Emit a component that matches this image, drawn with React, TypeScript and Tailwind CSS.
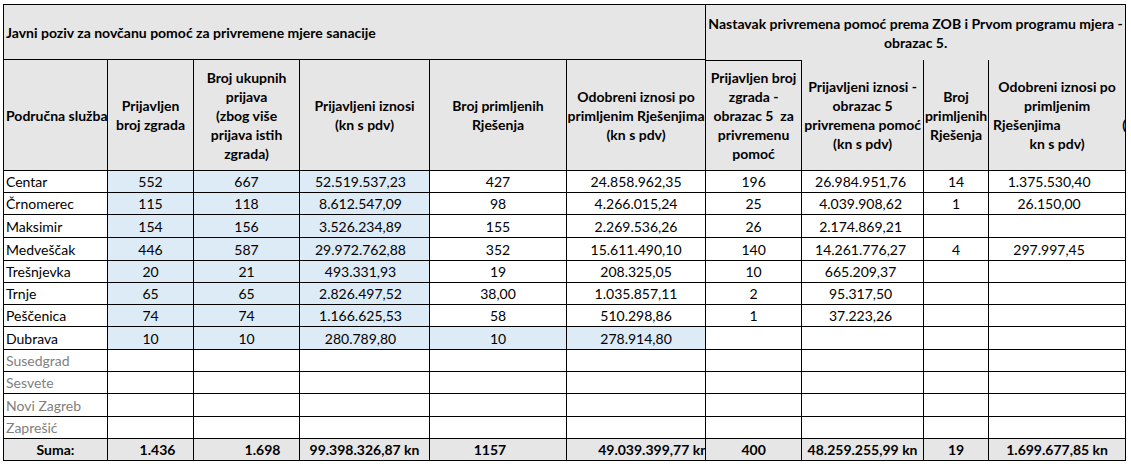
import React from 'react';

type Row = {
  name: string;
  v: string[];
  grey?: boolean;
  h: number;
};

const rows: Row[] = [
  { name: 'Centar', v: ['552', '667', '52.519.537,23', '427', '24.858.962,35', '196', '26.984.951,76', '14', '1.375.530,40'], h: 22 },
  { name: 'Črnomerec', v: ['115', '118', '8.612.547,09', '98', '4.266.015,24', '25', '4.039.908,62', '1', '26.150,00'], h: 22 },
  { name: 'Maksimir', v: ['154', '156', '3.526.234,89', '155', '2.269.536,26', '26', '2.174.869,21', '', ''], h: 23 },
  { name: 'Medveščak', v: ['446', '587', '29.972.762,88', '352', '15.611.490,10', '140', '14.261.776,27', '4', '297.997,45'], h: 23 },
  { name: 'Trešnjevka', v: ['20', '21', '493.331,93', '19', '208.325,05', '10', '665.209,37', '', ''], h: 22 },
  { name: 'Trnje', v: ['65', '65', '2.826.497,52', '38,00', '1.035.857,11', '2', '95.317,50', '', ''], h: 22 },
  { name: 'Peščenica', v: ['74', '74', '1.166.625,53', '58', '510.298,86', '1', '37.223,26', '', ''], h: 22 },
  { name: 'Dubrava', v: ['10', '10', '280.789,80', '10', '278.914,80', '', '', '', ''], h: 23 },
  { name: 'Susedgrad', v: ['', '', '', '', '', '', '', '', ''], grey: true, h: 22 },
  { name: 'Sesvete', v: ['', '', '', '', '', '', '', '', ''], grey: true, h: 22 },
  { name: 'Novi Zagreb', v: ['', '', '', '', '', '', '', '', ''], grey: true, h: 23 },
  { name: 'Zaprešić', v: ['', '', '', '', '', '', '', '', ''], grey: true, h: 22 },
];

const cell = 'border-r border-b border-black p-0 align-middle whitespace-nowrap overflow-hidden';
const hdr = 'border-r border-b border-black p-0 align-middle text-center font-bold leading-[19px] whitespace-nowrap overflow-hidden bg-[#e7e6e6]';

export default function App() {
  return (
    <div className="w-[1131px] h-[467px] bg-white pt-[4px] pl-[3px] text-black text-[14px] [font-family:Lato,'Liberation_Sans',sans-serif]">
      <table className="table-fixed border-separate border-spacing-0 border-l border-t border-black w-[1123px]">
        <colgroup>
          <col className="w-[104px]" />
          <col className="w-[86px]" />
          <col className="w-[106px]" />
          <col className="w-[130px]" />
          <col className="w-[137px]" />
          <col className="w-[139px]" />
          <col className="w-[96px]" />
          <col className="w-[122px]" />
          <col className="w-[65px]" />
          <col className="w-[137px]" />
        </colgroup>
        <tbody>
          <tr className="h-[55px]">
            <td colSpan={6} className={`${hdr} text-left pl-[2px]`}>
              Javni poziv za novčanu pomoć za privremene mjere sanacije
            </td>
            <td colSpan={4} className="border-r border-black p-0 align-middle text-center font-bold leading-[19px] bg-[#e7e6e6]">
              Nastavak privremena pomoć prema ZOB i Prvom programu mjera -<br />obrazac 5.
            </td>
          </tr>
          <tr className="h-[111px]">
            <td className={`${hdr} text-left pl-[2px]`}>Područna služba</td>
            <td className={hdr}>Prijavljen<br />broj zgrada</td>
            <td className={hdr}>Broj ukupnih<br />prijava<br />(zbog više<br />prijava istih<br />zgrada)</td>
            <td className={hdr}>Prijavljeni iznosi<br />(kn s pdv)</td>
            <td className={hdr}>Broj primljenih<br />Rješenja</td>
            <td className={hdr}>Odobreni iznosi po<br />primljenim Rješenjima<br />(kn s pdv)</td>
            <td className={`${hdr} border-t`}>Prijavljen broj<br />zgrada -<br />obrazac 5&nbsp; za<br />privremenu<br />pomoć</td>
            <td className={hdr}>Prijavljeni iznosi -<br />obrazac 5<br />privremena pomoć<br />(kn s pdv)</td>
            <td className={hdr}>Broj<br />primljenih<br />Rješenja</td>
            <td className={`${hdr} overflow-visible`}>
              <div>Odobreni iznosi po</div>
              <div>primljenim</div>
              <div className="flex justify-between pl-[4px] -mr-[1px]">
                <span>Rješenjima</span>
                <span>(</span>
              </div>
              <div>kn s pdv)</div>
            </td>
          </tr>
          {rows.map((r, i) => {
            const blueA = i < 8;
            const blueB = i === 7;
            return (
              <tr key={r.name} className={r.h === 23 ? 'h-[23px]' : 'h-[22px]'}>
                <td className={`${cell} pl-[2px] ${r.grey ? 'text-[#808080]' : ''}`}>{r.name}</td>
                <td className={`${cell} text-center ${blueA ? 'bg-[#ddebf7]' : ''}`}>{r.v[0]}</td>
                <td className={`${cell} text-center ${blueA ? 'bg-[#ddebf7]' : ''}`}>{r.v[1]}</td>
                <td className={`${cell} text-center pr-[8px] ${blueA ? 'bg-[#ddebf7]' : ''}`}>{r.v[2]}</td>
                <td className={`${cell} text-center ${blueB ? 'bg-[#ddebf7]' : ''}`}>{r.v[3]}</td>
                <td className={`${cell} text-center ${blueB ? 'bg-[#ddebf7]' : ''}`}>{r.v[4]}</td>
                <td className={`${cell} text-center`}>{r.v[5]}</td>
                <td className={`${cell} text-center pr-[4px]`}>{r.v[6]}</td>
                <td className={`${cell} text-center`}>{r.v[7]}</td>
                <td className={`${cell} text-center pr-[16px]`}>{r.v[8]}</td>
              </tr>
            );
          })}
          <tr className="h-[22px] font-bold bg-[#e7e6e6]">
            <td className={`${cell} text-center`}>Suma:</td>
            <td className={`${cell} text-center pl-[14px]`}>1.436</td>
            <td className={`${cell} text-center pl-[32px]`}>1.698</td>
            <td className={`${cell} text-center`}>99.398.326,87 kn</td>
            <td className={`${cell} text-center pr-[16px]`}>1157</td>
            <td className={`${cell} text-right`}>
              <span className="-mr-[3px]">49.039.399,77 kn</span>
            </td>
            <td className={`${cell} text-center`}>400</td>
            <td className={`${cell} text-center`}>48.259.255,99 kn</td>
            <td className={`${cell} text-center`}>19</td>
            <td className={`${cell} text-center`}>1.699.677,85 kn</td>
          </tr>
        </tbody>
      </table>
    </div>
  );
}
